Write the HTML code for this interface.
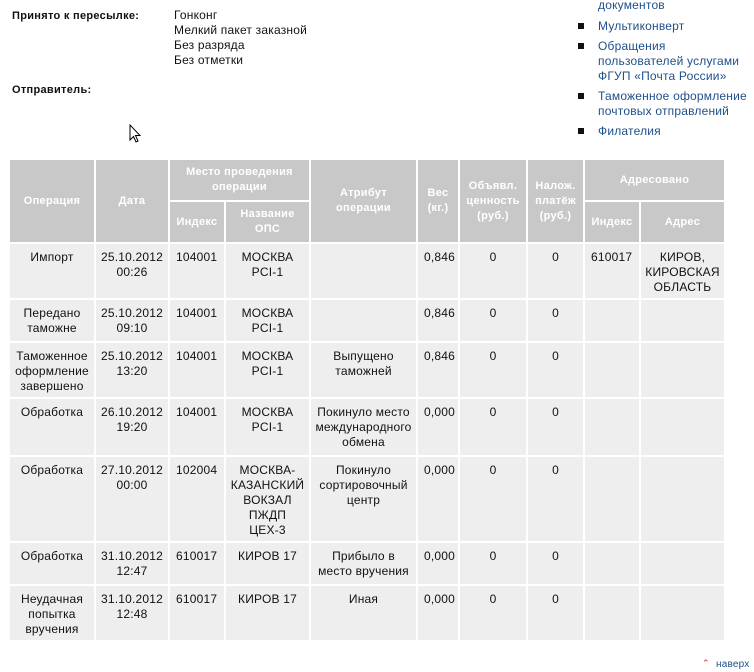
<!DOCTYPE html>
<html><head><meta charset="utf-8"><style>
body{margin:0;width:754px;height:666px;overflow:hidden;background:#fff;font-family:"Liberation Sans",sans-serif;font-size:12px;letter-spacing:0.2px;color:#111;position:relative}
.a{position:absolute;line-height:15px;white-space:nowrap}
b{font-weight:bold;font-size:11px;letter-spacing:0.3px}
.l{color:#1f4f8a}
.sq{position:absolute;width:6px;height:6px;background:#111}
table{position:absolute;left:8px;top:158px;border-collapse:separate;border-spacing:2px;table-layout:fixed}
td,th{padding:0;font-size:12px;line-height:15px;letter-spacing:0.2px}
th{background:#c8c8c8;color:#fff;font-weight:bold;text-align:center;font-size:11px;letter-spacing:0.3px}
td{background:#eeeeee;vertical-align:top;text-align:center;padding-top:6px}
td.i{text-align:left;padding-left:6px}
</style></head><body>
<div class="a" style="left:12px;top:8px"><b>Принято к пересылке:</b></div>
<div class="a" style="left:174px;top:8px">Гонконг<br>Мелкий пакет заказной<br>Без разряда<br>Без отметки</div>
<div class="a" style="left:12px;top:82px"><b>Отправитель:</b></div>
<svg style="position:absolute;left:129px;top:124px" width="14" height="20" viewBox="0 0 14 20"><path d="M1 1 L1 16 L4.5 12.5 L7 18 L9 17 L6.5 11.5 L11 11.5 Z" fill="#fff" stroke="#000" stroke-width="1"/></svg>

<div class="a l" style="left:598px;top:-2px">документов</div>
<div class="sq" style="left:578px;top:23px"></div><div class="a l" style="left:598px;top:19px">Мультиконверт</div>
<div class="sq" style="left:578px;top:43px"></div><div class="a l" style="left:598px;top:39px">Обращения<br>пользователей услугами<br>ФГУП «Почта России»</div>
<div class="sq" style="left:578px;top:93px"></div><div class="a l" style="left:598px;top:89px">Таможенное оформление<br>почтовых отправлений</div>
<div class="sq" style="left:578px;top:128px"></div><div class="a l" style="left:598px;top:124px">Филателия</div>

<table>
<colgroup><col style="width:84px"><col style="width:72px"><col style="width:54px"><col style="width:83px"><col style="width:105px"><col style="width:40px"><col style="width:66px"><col style="width:55px"><col style="width:54px"><col style="width:83px"></colgroup>
<tr style="height:40px"><th rowspan="2">Операция</th><th rowspan="2">Дата</th><th colspan="2">Место проведения<br>операции</th><th rowspan="2">Атрибут<br>операции</th><th rowspan="2">Вес<br>(кг.)</th><th rowspan="2">Объявл.<br>ценность<br>(руб.)</th><th rowspan="2">Налож.<br>платёж<br>(руб.)</th><th colspan="2">Адресовано</th></tr>
<tr style="height:40px"><th>Индекс</th><th>Название<br>ОПС</th><th>Индекс</th><th>Адрес</th></tr>
<tr style="height:54px"><td>Импорт</td><td>25.10.2012<br>00:26</td><td class="i">104001</td><td>МОСКВА<br>PCI-1</td><td></td><td class="i">0,846</td><td>0</td><td>0</td><td class="i">610017</td><td>КИРОВ,<br>КИРОВСКАЯ<br>ОБЛАСТЬ</td></tr>
<tr style="height:41px"><td>Передано<br>таможне</td><td>25.10.2012<br>09:10</td><td class="i">104001</td><td>МОСКВА<br>PCI-1</td><td></td><td class="i">0,846</td><td>0</td><td>0</td><td></td><td></td></tr>
<tr style="height:54px"><td>Таможенное<br>оформление<br>завершено</td><td>25.10.2012<br>13:20</td><td class="i">104001</td><td>МОСКВА<br>PCI-1</td><td>Выпущено<br>таможней</td><td class="i">0,846</td><td>0</td><td>0</td><td></td><td></td></tr>
<tr style="height:56px"><td>Обработка</td><td>26.10.2012<br>19:20</td><td class="i">104001</td><td>МОСКВА<br>PCI-1</td><td>Покинуло место<br>международного<br>обмена</td><td class="i">0,000</td><td>0</td><td>0</td><td></td><td></td></tr>
<tr style="height:84px"><td>Обработка</td><td>27.10.2012<br>00:00</td><td class="i">102004</td><td>МОСКВА-<br>КАЗАНСКИЙ<br>ВОКЗАЛ<br>ПЖДП<br>ЦЕХ-3</td><td>Покинуло<br>сортировочный<br>центр</td><td class="i">0,000</td><td>0</td><td>0</td><td></td><td></td></tr>
<tr style="height:41px"><td>Обработка</td><td>31.10.2012<br>12:47</td><td class="i">610017</td><td>КИРОВ 17</td><td>Прибыло в<br>место вручения</td><td class="i">0,000</td><td>0</td><td>0</td><td></td><td></td></tr>
<tr style="height:54px"><td>Неудачная<br>попытка<br>вручения</td><td>31.10.2012<br>12:48</td><td class="i">610017</td><td>КИРОВ 17</td><td>Иная</td><td class="i">0,000</td><td>0</td><td>0</td><td></td><td></td></tr>
</table>
<div class="a" style="left:702px;top:656px;color:#c03030;font-size:9px">&#8963;</div>
<div class="a l" style="left:716px;top:657px;font-size:10px">наверх</div>
</body></html>
